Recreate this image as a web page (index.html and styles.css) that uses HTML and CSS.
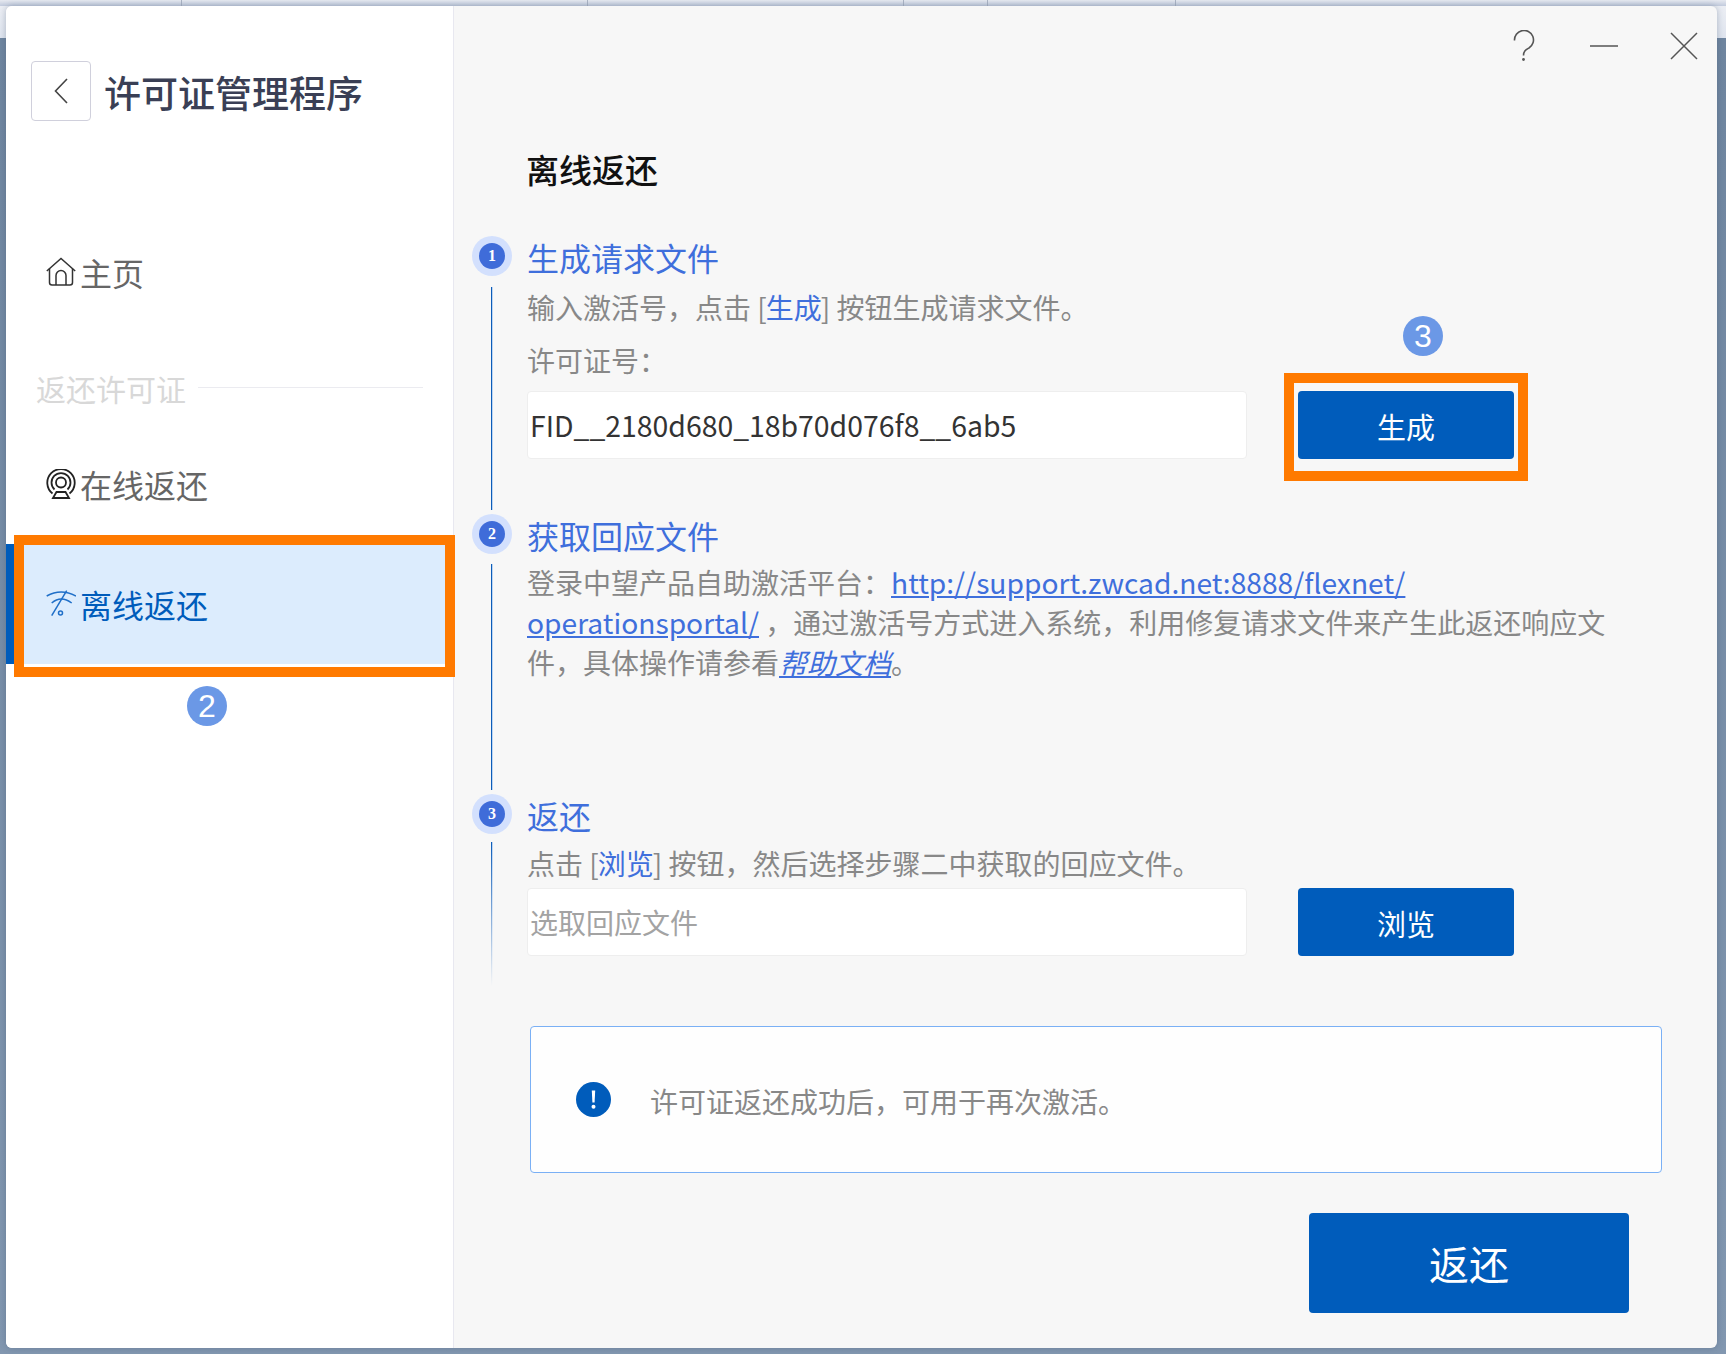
FILE: index.html
```html
<!DOCTYPE html>
<html lang="zh-CN">
<head>
  <meta charset="UTF-8">
  <title>许可证管理程序</title>
  <link rel="stylesheet" href="styles.css">
</head>
<body>
  <div class="tabstrip">
    <span class="tab tab-a"></span>
    <span class="tab tab-b"></span>
    <span class="tab tab-c"></span>
    <span class="tab tab-d"></span>
    <span class="tab tab-e"></span>
  </div>

  <div class="window">
    <aside class="sidebar">
      <div class="app-head">
        <button class="back-btn" type="button">
          <svg width="14" height="26" viewBox="0 0 14 26" fill="none" stroke="#444" stroke-width="1.6"><path d="M13 1 L1.5 13 L13 25"/></svg>
        </button>
        <span class="app-title">许可证管理程序</span>
      </div>

      <nav class="nav">
        <a class="nav-item nav-home">
          <svg class="nav-icon" width="30" height="30" viewBox="0 0 30 30" fill="none" stroke="#333" stroke-width="1.5">
            <path d="M0.8 14 L15 1.5 L29.2 14"/>
            <path d="M3.5 11.5 V25.5 Q3.5 28 6 28 H24 Q26.5 28 26.5 25.5 V11.5"/>
            <path d="M10 28 V18.5 A5 5 0 0 1 20 18.5 V28"/>
          </svg>
          主页
        </a>
        <div class="nav-group">
          <span>返还许可证</span>
          <i class="nav-rule"></i>
        </div>
        <a class="nav-item">
          <svg class="nav-icon" width="30" height="30" viewBox="0 0 30 30" fill="none" stroke="#222" stroke-width="1.8">
            <path d="M6.5 24.5 A13.7 13.7 0 1 1 23.5 24.5"/>
            <path d="M8.5 20.5 A9.5 9.5 0 1 1 21.5 20.5"/>
            <circle cx="15" cy="13.5" r="5"/>
            <path d="M7 29 L10.5 23 H19.5 L23 29 Z"/>
          </svg>
          在线返还
        </a>
        <a class="nav-item active">
          <svg class="nav-icon" width="30" height="30" viewBox="0 0 30 30" fill="none" stroke="#1f6fc8" stroke-width="1.5">
            <path d="M0.7 7 Q15 -1 30 7"/>
            <path d="M5.7 14 Q15 6 25.7 14"/>
            <path d="M20.7 1.7 L5.7 26.7"/>
            <circle cx="14.5" cy="24" r="2"/>
          </svg>
          离线返还
        </a>
      </nav>

      <div class="mark mark-nav"></div>
      <div class="badge badge-nav">2</div>
    </aside>

    <main class="main">
      <div class="win-controls">
        <svg width="30" height="32" viewBox="0 0 30 32" fill="none" stroke="#555" stroke-width="1.6">
          <path d="M5.5 10.5 A9.5 9.5 0 1 1 20 18 C16.5 20 14.5 21 14.5 25.5"/>
          <circle cx="14.5" cy="29.5" r="1.4" fill="#555" stroke="none"/>
        </svg>
        <svg width="30" height="32" viewBox="0 0 30 32" fill="none" stroke="#555" stroke-width="1.5">
          <path d="M1 16 H29"/>
        </svg>
        <svg width="30" height="32" viewBox="0 0 30 32" fill="none" stroke="#555" stroke-width="1.5">
          <path d="M2 3 L28 29 M28 3 L2 29"/>
        </svg>
      </div>

      <h2 class="page-title">离线返还</h2>

      <div class="steps">
        <section class="step step-gen">
          <div class="step-marker">
            <span class="step-num"><b>1</b></span>
            <i class="step-line"></i>
          </div>
          <div class="step-body">
            <h3 class="step-title">生成请求文件</h3>
            <p class="step-text">输入激活号，点击 [<span class="hl">生成</span>] 按钮生成请求文件。</p>
            <p class="step-text field-label">许可证号：</p>
            <div class="field-row">
              <div class="field">FID__2180d680_18b70d076f8__6ab5</div>
              <button class="btn" type="button">生成</button>
              <div class="mark mark-btn"></div>
              <div class="badge badge-btn">3</div>
            </div>
          </div>
        </section>

        <section class="step step-get">
          <div class="step-marker">
            <span class="step-num"><b>2</b></span>
            <i class="step-line"></i>
          </div>
          <div class="step-body">
            <h3 class="step-title">获取回应文件</h3>
            <p class="step-text">登录中望产品自助激活平台：<a class="link">http://support.zwcad.net:8888/flexnet/</a><br><a class="link">operationsportal/</a> ，通过激活号方式进入系统，利用修复请求文件来产生此返还响应文<br>件，具体操作请参看<a class="link link-help">帮助文档</a>。</p>
          </div>
        </section>

        <section class="step step-back">
          <div class="step-marker">
            <span class="step-num"><b>3</b></span>
            <i class="step-line line-fade"></i>
          </div>
          <div class="step-body">
            <h3 class="step-title">返还</h3>
            <p class="step-text">点击 [<span class="hl">浏览</span>] 按钮，然后选择步骤二中获取的回应文件。</p>
            <div class="field-row">
              <div class="field field-empty">选取回应文件</div>
              <button class="btn" type="button">浏览</button>
            </div>
          </div>
        </section>
      </div>

      <div class="notice">
        <svg width="35" height="35" viewBox="0 0 35 35">
          <circle cx="17.5" cy="17.5" r="17.5" fill="#005cbb"/>
          <path d="M15.8 8.5 H19.2 L18.6 20.5 H16.4 Z" fill="#fff"/>
          <circle cx="17.5" cy="24.8" r="2" fill="#fff"/>
        </svg>
        <span class="notice-text">许可证返还成功后，可用于再次激活。</span>
      </div>

      <button class="btn-return" type="button">返还</button>
    </main>
  </div>
</body>
</html>
```

FILE: styles.css
```css
* {
  box-sizing: border-box;
}
html, body {
  height: 100%;
}
body {
  margin: 0;
  overflow: hidden;
  font-family: "Noto Sans CJK SC", "Noto Sans", sans-serif;
  background: linear-gradient(#eef0f5 0, #dfe4ee 38px, #6f859f 38px, #8297b0 100%);
}
.tabstrip {
  display: flex;
  height: 6px;
  background: linear-gradient(#e6e9f0, #c2cbdd);
}
.tab {
  border-right: 1px solid #aab3c4;
}
.tab-a { width: 182px; }
.tab-b { width: 406px; }
.tab-c { width: 316px; }
.tab-d { width: 84px; }
.tab-e { width: 188px; }

.window {
  position: relative;
  display: flex;
  width: 1711px;
  height: 1342px;
  margin-left: 6px;
  border-radius: 6px;
  overflow: visible;
  background: #f7f7f7;
  box-shadow: 0 0 6px rgba(60, 80, 110, 0.35);
}

/* sidebar */
.sidebar {
  position: relative;
  width: 448px;
  flex-shrink: 0;
  padding-top: 55px;
  background: #fff;
  border-right: 1px solid #e8e8f0;
  border-radius: 6px 0 0 6px;
}
.app-head {
  display: flex;
  align-items: center;
  gap: 13px;
  height: 60px;
  padding-left: 25px;
}
.back-btn {
  display: flex;
  align-items: center;
  justify-content: center;
  width: 60px;
  height: 60px;
  padding: 0;
  background: #fff;
  border: 1px solid #d0d0dc;
  border-radius: 4px;
}
.app-title {
  padding-top: 2px;
  color: #3a3f55;
  font-size: 37px;
  font-weight: 500;
  line-height: 58px;
}
.nav {
  margin-top: 91px;
}
.nav-item {
  display: flex;
  align-items: center;
  gap: 4px;
  height: 120px;
  padding-left: 40px;
  color: #666;
  font-size: 32px;
}
.nav-icon {
  flex-shrink: 0;
}
.nav-group {
  display: flex;
  align-items: center;
  gap: 12px;
  height: 40px;
  margin: 36px 30px 16px 30px;
  color: #d8d8d8;
  font-size: 30px;
}
.nav-rule {
  flex: 1;
  height: 1px;
  margin-top: -1px;
  background: #ebebf0;
}
.nav-item.active {
  color: #005cbb;
  background: linear-gradient(90deg, #005cbb 8px, #dcecfd 8px);
}

/* orange call-outs and number badges drawn over the shot */
.mark {
  position: absolute;
  border: 10px solid #ff7a00;
}
.mark-nav {
  left: 8px;
  top: 529px;
  width: 441px;
  height: 142px;
}
.mark-btn {
  left: 757px;
  top: -18px;
  width: 244px;
  height: 108px;
}
.badge {
  position: absolute;
  width: 40px;
  height: 40px;
  border-radius: 50%;
  background: #6b98e6;
  color: #fff;
  font-family: "Liberation Sans", sans-serif;
  font-size: 32px;
  line-height: 40px;
  text-align: center;
}
.badge-nav {
  left: 181px;
  top: 680px;
}
.badge-btn {
  left: 876px;
  top: -75px;
}

/* main panel */
.main {
  flex: 1;
  display: flex;
  flex-direction: column;
  min-width: 0;
  padding-top: 24px;
  border-radius: 0 6px 6px 0;
}
.win-controls {
  display: flex;
  justify-content: flex-end;
  gap: 50px;
  padding-right: 18px;
}
.page-title {
  margin: 87px 0 0 72px;
  color: #111;
  font-size: 33px;
  font-weight: 500;
  line-height: 40px;
}
.steps {
  margin-top: 47px;
  padding-left: 18px;
}
.step {
  display: flex;
  gap: 15px;
}
.step-gen {
  padding-bottom: 55px;
}
.step-get {
  padding-bottom: 112px;
}
.step-back {
  padding-bottom: 30px;
}
.step-marker {
  display: flex;
  flex-direction: column;
  align-items: center;
  width: 40px;
}
.step-gen .step-marker {
  margin-bottom: -51px;
}
.step-get .step-marker {
  margin-bottom: -108px;
}
.step-back .step-marker {
  margin-bottom: -30px;
}
.step-num {
  display: flex;
  align-items: center;
  justify-content: center;
  flex-shrink: 0;
  width: 40px;
  height: 40px;
  border-radius: 50%;
  background: #d3e0fd;
}
.step-num b {
  width: 26px;
  height: 26px;
  border-radius: 50%;
  background: #3f6cd9;
  color: #fff;
  font-family: "Liberation Serif", serif;
  font-size: 16px;
  line-height: 26px;
  text-align: center;
}
.step-line {
  flex: 1;
  width: 2px;
  margin-top: 11px;
  background: linear-gradient(90deg, #0d5cb8 50%, #bcd5f2 50%);
}
.step-get .step-line {
  margin-top: 10px;
}
.step-back .line-fade {
  margin-top: 8px;
  -webkit-mask-image: linear-gradient(#000, transparent);
  mask-image: linear-gradient(#000, transparent);
}
.step-body {
  flex: 1;
  min-width: 0;
}
.step-title {
  margin: -1px 0 0;
  color: #3f6fdc;
  font-size: 32px;
  font-weight: 400;
  line-height: 44px;
}
.step-text {
  margin: 8px 0 0;
  color: #888;
  font-size: 28px;
  line-height: 40px;
}
.field-label {
  margin-top: 13px;
}
.step-get .step-text {
  margin-top: 5px;
}
.step-back .step-text {
  margin-top: 6px;
}
.hl,
.link {
  color: #3f6fdc;
}
.hl {
  margin: 0 -1px;
}
.link {
  font-size: 28.2px;
  text-decoration: underline;
}
.link-help {
  font-size: 28px;
  font-style: italic;
}
.field-row {
  position: relative;
  display: flex;
  gap: 51px;
  margin-top: 11px;
}
.step-back .field-row {
  margin-top: 5px;
}
.field {
  width: 720px;
  height: 68px;
  padding-left: 2px;
  background: #fff;
  border: 1px solid #eee;
  border-radius: 4px;
  color: #333;
  font-size: 28.4px;
  line-height: 66px;
}
.field-empty {
  color: #a3a3a3;
  font-size: 28px;
}
.btn {
  width: 216px;
  height: 68px;
  padding: 2px 0 0;
  background: #005cbb;
  border: none;
  border-radius: 4px;
  color: #fff;
  font-family: inherit;
  font-size: 29px;
}
.notice {
  display: flex;
  align-items: center;
  gap: 39px;
  height: 147px;
  margin: 40px 55px 0 76px;
  padding-left: 45px;
  background: #fefefe;
  border: 1px solid #7ab0f5;
  border-radius: 4px;
  color: #888;
  font-size: 28px;
}
.notice-text {
  padding-top: 2px;
}
.btn-return {
  align-self: flex-end;
  width: 320px;
  height: 100px;
  margin: 40px 88px 0 0;
  padding: 0;
  background: #005cbb;
  border: none;
  border-radius: 4px;
  color: #fff;
  font-family: inherit;
  font-size: 40px;
}
```
